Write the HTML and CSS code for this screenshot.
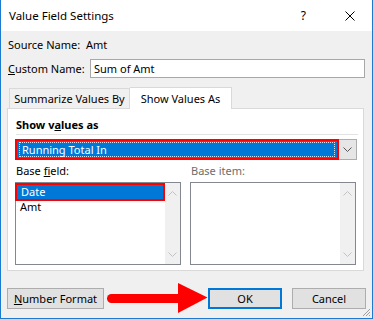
FILE: index.html
```html
<!DOCTYPE html>
<html>
<head>
<meta charset="utf-8">
<link rel="stylesheet" href="styles.css">
</head>
<body>
<div class="window">
  <div class="titlebar">
    <span class="title">Value Field Settings</span>
    <span class="help">?</span>
    <svg class="close" width="10" height="10" viewBox="0 0 10 10"><path d="M0.5 0.5 L9.5 9.5 M9.5 0.5 L0.5 9.5" stroke="#000" stroke-width="1"/></svg>
  </div>
  <div class="content">
    <div class="row source">
      <span class="lbl">Source Name:</span><span>Amt</span>
    </div>
    <div class="row custom">
      <span class="lbl"><u>C</u>ustom Name:</span>
      <div class="input">Sum of Amt</div>
    </div>
    <div class="tabs">
      <div class="tab">Summarize Values By</div>
      <div class="tab active">Show Values As</div>
    </div>
    <div class="panel">
      <div class="heading">Show v<u>a</u>lues as</div>
      <div class="sep"></div>
      <div class="combo">
        <div class="combo-field"><span class="focus">Running Total In</span></div>
        <div class="combo-btn"><svg width="9" height="5" viewBox="0 0 9 5"><path d="M0.5 0.5 L4.5 4.5 L8.5 0.5" fill="none" stroke="#555" stroke-width="1"/></svg></div>
      </div>
      <div class="lists">
        <div class="col">
          <div class="cap">Base <u>f</u>ield:</div>
          <div class="list">
            <div class="items">
              <div class="item sel">Date</div>
              <div class="item">Amt</div>
            </div>
            <div class="sb">
              <svg width="9" height="5" viewBox="0 0 9 5"><path d="M0.5 4.5 L4.5 0.5 L8.5 4.5" fill="none" stroke="#c2c2c2" stroke-width="1"/></svg>
              <svg width="9" height="5" viewBox="0 0 9 5"><path d="M0.5 0.5 L4.5 4.5 L8.5 0.5" fill="none" stroke="#c2c2c2" stroke-width="1"/></svg>
            </div>
          </div>
        </div>
        <div class="col">
          <div class="cap dis">Base item:</div>
          <div class="list">
            <div class="items"></div>
            <div class="sb">
              <svg width="9" height="5" viewBox="0 0 9 5"><path d="M0.5 4.5 L4.5 0.5 L8.5 4.5" fill="none" stroke="#c2c2c2" stroke-width="1"/></svg>
              <svg width="9" height="5" viewBox="0 0 9 5"><path d="M0.5 0.5 L4.5 4.5 L8.5 0.5" fill="none" stroke="#c2c2c2" stroke-width="1"/></svg>
            </div>
          </div>
        </div>
      </div>
    </div>
    <div class="buttons">
      <div class="btn numfmt"><u>N</u>umber Format</div>
      <div class="spacer"></div>
      <div class="btn ok">OK</div>
      <div class="btn">Cancel</div>
    </div>
  </div>
  <svg class="arrow" width="104" height="32" viewBox="105 282 104 32">
    <path d="M111.5 294 L181 294 L181 303 L111.5 303 A4.5 4.5 0 0 1 111.5 294 Z" fill="#ff0000"/>
    <polygon points="178,283 207.5,297.5 178,313" fill="#ff0000"/>
  </svg>
  <svg class="grip" width="10" height="10" viewBox="0 0 10 10"><path d="M9 2 L2 9 M9 5 L5 9 M9 8 L8 9" stroke="#a0a0a0" stroke-width="1"/></svg>
</div>
</body>
</html>
```
FILE: styles.css
```css
* { box-sizing: border-box; }
html, body { margin: 0; padding: 0; }
body {
  width: 373px;
  height: 319px;
  font-family: "Noto Sans", "Open Sans", sans-serif;
  font-size: 11px;
  color: #000;
  overflow: hidden;
  white-space: nowrap;
}
.window {
  position: relative;
  width: 373px;
  height: 319px;
  border-left: 1px solid #1c7bd0;
  border-right: 1px solid #1c7bd0;
  border-bottom: 1px solid #1c7bd0;
  background: #f0f0f0;
  display: flex;
  flex-direction: column;
}
.titlebar {
  height: 31px;
  background: #fff;
  display: flex;
  align-items: center;
  padding-left: 8px;
  flex-shrink: 0;
}
.title { flex: 1; line-height: 16px; font-size: 11.5px; }
.help { margin-right: 39px; line-height: 16px; font-size: 12px; }
.close { margin-right: 17px; }
.content {
  flex: 1;
  display: flex;
  flex-direction: column;
  padding: 0 6px 0 6px;
}
.row { display: flex; align-items: center; padding-left: 1px; }
.source { margin-top: 6px; height: 16px; line-height: 16px; }
.source .lbl { width: 78px; }
.custom { margin-top: 6px; height: 19px; }
.custom .lbl { width: 82px; }
.input {
  width: 275px;
  height: 19px;
  background: #fff;
  border: 1px solid #a8a8a8;
  padding-left: 3px;
  line-height: 17px;
}
.tabs {
  display: flex;
  align-items: flex-end;
  margin-top: 9px;
  padding-left: 2px;
  height: 21px;
  position: relative;
  z-index: 1;
}
.tab {
  height: 20px;
  line-height: 20px;
  border: 1px solid #d9d9d9;
  border-bottom: none;
  width: 121px;
  text-align: center;
}
.tab.active {
  height: 22px;
  margin-bottom: -1px;
  background: #fff;
  width: 102px;
  border-left: none;
  line-height: 21px;
}
.panel {
  height: 163px;
  width: 357px;
  background: #fff;
  border: 1px solid #d9d9d9;
  padding: 8px 5px 0 7px;
}
.heading { font-weight: bold; line-height: 16px; height: 16px; padding-left: 1px; }
.sep { height: 1px; background: #e3e3e3; margin: 1px 0 4px 1px; }
.combo {
  display: flex;
  height: 21px;
  width: 342px;
}
.combo-field {
  flex: 1;
  background: #0078d7;
  border: 2px solid #ff0000;
  padding: 1px 2px;
}
.focus {
  display: block;
  height: 15px;
  border: 1px dotted #cfe4f7;
  color: #fff;
  line-height: 13px;
  padding-left: 2px;
}
.combo-btn {
  width: 18px;
  background: #e6e6e6;
  border: 1px solid #adadad;
  border-left: none;
  display: flex;
  align-items: center;
  justify-content: center;
}
.lists { display: flex; gap: 9px; margin-top: 3px; }
.col { width: 166px; }
.cap { line-height: 16px; height: 16px; padding-left: 1px; margin-bottom: 3px; }
.cap.dis { color: #6d6d6d; }
.list {
  height: 83px;
  border: 1px solid #828790;
  background: #fff;
  display: flex;
  position: relative;
}
.items { flex: 1; padding-top: 1px; }
.item { height: 14px; line-height: 14px; padding-left: 4px; }
.item.sel {
  background: #0078d7;
  color: #fff;
  outline: 2px solid #ff0000;
  outline-offset: 0;
  margin: 1px 2px 1px 1px;
}
.sb {
  width: 15px;
  background: #f0f0f0;
  display: flex;
  flex-direction: column;
  justify-content: space-between;
  align-items: center;
  padding: 8px 0 7px;
}
.buttons {
  display: flex;
  margin-top: 17px;
  height: 21px;
  gap: 10px;
}
.spacer { flex: 1; }
.btn {
  width: 74px;
  height: 21px;
  background: #e1e1e1;
  border: 1px solid #adadad;
  text-align: center;
  line-height: 19px;
}
.numfmt { width: 97px; }
.ok { border: 2px solid #0078d7; line-height: 17px; }
.arrow { position: absolute; left: 104px; top: 282px; }
.grip { position: absolute; right: 1px; bottom: 1px; }
```
